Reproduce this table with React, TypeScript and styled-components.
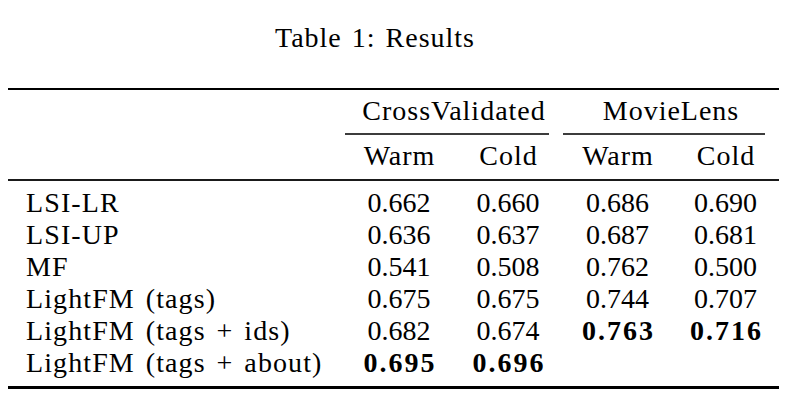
import React from "react";
import styled, { createGlobalStyle, css } from "styled-components";

const serif = css`
  font-family: "Liberation Serif", "Times New Roman", serif;
`;

const GlobalStyle = createGlobalStyle`
  html, body {
    margin: 0;
    padding: 0;
    background: #ffffff;
  }
  body {
    ${serif}
    color: #000000;
  }
`;

const COLS = "337px 108px 110px 109px 107px";

const Page = styled.div`
  width: 792px;
  height: 402px;
  overflow: hidden;
  background: #ffffff;
  ${serif}
`;

const Caption = styled.div`
  ${serif}
  width: 750px;
  padding-top: 22px;
  font-size: 28px;
  line-height: 32px;
  text-align: center;
  letter-spacing: 1px;
  word-spacing: 2px;
`;

const Table = styled.div`
  ${serif}
  margin-top: 34px;
  margin-left: 8px;
  width: 771px;
  border-top: 2px solid #000;
  border-bottom: 3px solid #000;
  font-size: 28px;
  line-height: 32px;
`;

const Row = styled.div<{ $pt?: number }>`
  display: grid;
  grid-template-columns: ${COLS};
  padding-top: ${(p) => p.$pt ?? 0}px;
`;

const GroupHead = styled.div`
  ${serif}
  grid-column: span 2;
  text-align: center;
  letter-spacing: 1px;
`;

const CmidRule = styled.div<{ $trimRight: number }>`
  grid-column: span 2;
  height: 2px;
  margin-right: ${(p) => p.$trimRight}px;
  background: #3c3c3c;
`;

const HeadCell = styled.div`
  ${serif}
  text-align: center;
  letter-spacing: 1px;
  padding-left: 1px;
`;

const MidRule = styled.div`
  margin-top: 7px;
  height: 2px;
  background: #1a1a1a;
`;

const Body = styled.div`
  padding-top: 6px;
  padding-bottom: 7px;
`;

const Label = styled.div`
  ${serif}
  padding-left: 18px;
  letter-spacing: 1.1px;
  word-spacing: 2.8px;
  white-space: nowrap;
`;

const Num = styled.div<{ $bold?: boolean }>`
  ${serif}
  text-align: center;
  font-weight: ${(p) => (p.$bold ? 700 : 400)};
  letter-spacing: ${(p) => (p.$bold ? "2px" : "0px")};
  padding-left: ${(p) => (p.$bold ? "2px" : "0px")};
`;

type Cell = { v: string; b?: boolean };
type DataRow = { name: string; cells: Cell[] };

const rows: DataRow[] = [
  { name: "LSI-LR", cells: [{ v: "0.662" }, { v: "0.660" }, { v: "0.686" }, { v: "0.690" }] },
  { name: "LSI-UP", cells: [{ v: "0.636" }, { v: "0.637" }, { v: "0.687" }, { v: "0.681" }] },
  { name: "MF", cells: [{ v: "0.541" }, { v: "0.508" }, { v: "0.762" }, { v: "0.500" }] },
  { name: "LightFM (tags)", cells: [{ v: "0.675" }, { v: "0.675" }, { v: "0.744" }, { v: "0.707" }] },
  {
    name: "LightFM (tags + ids)",
    cells: [{ v: "0.682" }, { v: "0.674" }, { v: "0.763", b: true }, { v: "0.716", b: true }],
  },
  {
    name: "LightFM (tags + about)",
    cells: [{ v: "0.695", b: true }, { v: "0.696", b: true }, { v: "" }, { v: "" }],
  },
];

export default function App() {
  return (
    <Page>
      <GlobalStyle />
      <Caption>Table 1: Results</Caption>
      <Table>
        <Row $pt={5}>
          <div />
          <GroupHead>CrossValidated</GroupHead>
          <GroupHead>MovieLens</GroupHead>
        </Row>
        <Row $pt={6}>
          <div />
          <CmidRule $trimRight={14} />
          <CmidRule $trimRight={14} />
        </Row>
        <Row $pt={5}>
          <div />
          <HeadCell>Warm</HeadCell>
          <HeadCell>Cold</HeadCell>
          <HeadCell>Warm</HeadCell>
          <HeadCell>Cold</HeadCell>
        </Row>
        <MidRule />
        <Body>
          {rows.map((r) => (
            <Row key={r.name}>
              <Label>{r.name}</Label>
              {r.cells.map((c, i) => (
                <Num key={i} $bold={c.b}>
                  {c.v}
                </Num>
              ))}
            </Row>
          ))}
        </Body>
      </Table>
    </Page>
  );
}
